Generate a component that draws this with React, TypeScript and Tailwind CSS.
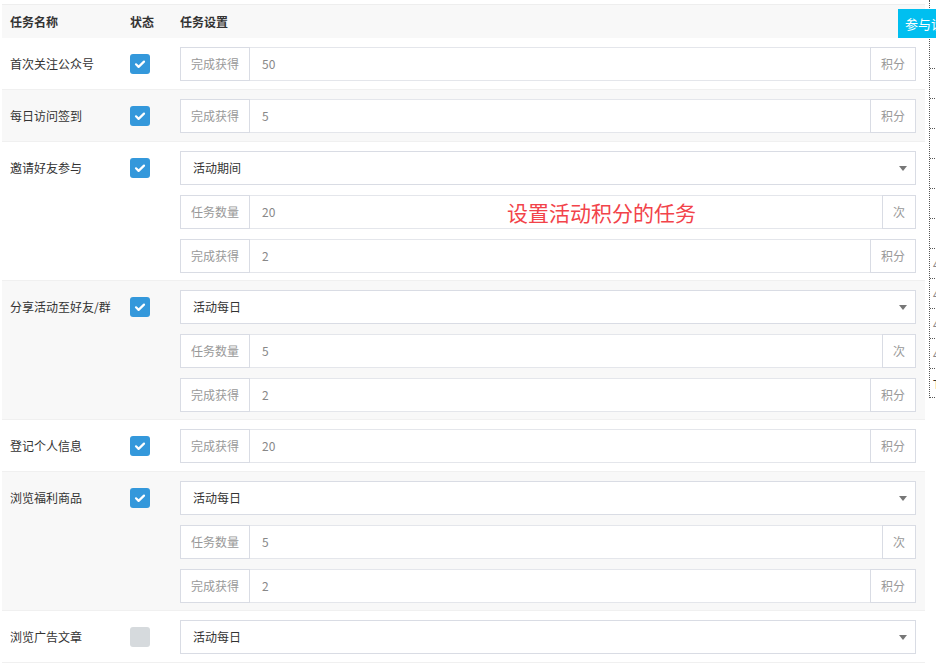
import React from 'react';

type Field =
  | { type: 'select'; value: string }
  | { type: 'input'; label: string; value: string; unit: string };

interface TaskRow {
  name: string;
  on: boolean;
  fields: Field[];
}

const daily = (count: string, points: string): Field[] => [
  { type: 'select', value: '活动每日' },
  { type: 'input', label: '任务数量', value: count, unit: '次' },
  { type: 'input', label: '完成获得', value: points, unit: '积分' },
];

// last row continues below the fold, only its select is in view
const rows: TaskRow[] = [
  { name: '首次关注公众号', on: true, fields: [{ type: 'input', label: '完成获得', value: '50', unit: '积分' }] },
  { name: '每日访问签到', on: true, fields: [{ type: 'input', label: '完成获得', value: '5', unit: '积分' }] },
  {
    name: '邀请好友参与',
    on: true,
    fields: [
      { type: 'select', value: '活动期间' },
      { type: 'input', label: '任务数量', value: '20', unit: '次' },
      { type: 'input', label: '完成获得', value: '2', unit: '积分' },
    ],
  },
  { name: '分享活动至好友/群', on: true, fields: daily('5', '2') },
  { name: '登记个人信息', on: true, fields: [{ type: 'input', label: '完成获得', value: '20', unit: '积分' }] },
  { name: '浏览福利商品', on: true, fields: daily('5', '2') },
  { name: '浏览广告文章', on: false, fields: [{ type: 'select', value: '活动每日' }] },
];

const font = { fontFamily: '"Noto Sans CJK SC", "Liberation Sans", sans-serif' };

function Checkbox({ on }: { on: boolean }) {
  if (!on) return <div className="w-5 h-5 rounded-[3px] bg-[#d6dadd]" />;
  return (
    <div className="w-5 h-5 rounded-[3px] bg-[#3498db] flex items-center justify-center">
      <svg width="14" height="14" viewBox="0 0 14 14" fill="none">
        <path d="M3 7.3l2.6 2.6L11 4.6" stroke="white" strokeWidth="2.2" strokeLinecap="round" strokeLinejoin="round" />
      </svg>
    </div>
  );
}

function Control({ field }: { field: Field }) {
  if (field.type === 'select') {
    return (
      <div className="h-[34px] flex items-center bg-white border border-[#d9dce4] pl-3 pr-2">
        <span className="flex-1 text-xs text-[#333]">{field.value}</span>
        <span className="w-0 h-0 border-x-4 border-x-transparent border-t-[5px] border-t-[#777]" />
      </div>
    );
  }
  return (
    <div className="h-[34px] flex bg-white">
      <div className="w-[70px] shrink-0 flex items-center justify-center border border-[#d9dce4] text-xs text-[#999]">
        {field.label}
      </div>
      <div className="flex-1 flex items-center pl-3 border-y border-[#e4e6eb] text-xs text-[#888]">{field.value}</div>
      <div
        className={`shrink-0 flex items-center justify-center border border-[#d9dce4] text-xs text-[#999] ${
          field.unit === '次' ? 'w-[34px]' : 'w-[46px]'
        }`}
      >
        {field.unit}
      </div>
    </div>
  );
}

export default function App() {
  return (
    <div className="relative w-[936px] h-[663px] overflow-hidden bg-white flex items-start" style={font}>
      <div className="ml-[2px] mt-1 w-[923px] shrink-0">
        <div className="h-[34px] flex items-center border-t border-[#eee] bg-[#f8f8f8] text-xs font-bold text-[#333]">
          <div className="w-[118px] pl-2">任务名称</div>
          <div className="w-[50px] pl-[10px]">状态</div>
          <div className="pl-[10px]">任务设置</div>
        </div>
        {rows.map((row, i) => (
          <div
            key={row.name}
            className={`flex pt-[9px] border-b border-[#f0f0f0] ${row.fields.length > 1 ? 'pb-[7px]' : 'pb-2'} ${
              i % 2 === 1 ? 'bg-[#f8f8f8]' : 'bg-white'
            }`}
          >
            <div className="w-[118px] pl-2 h-[34px] flex items-center text-xs text-[#333] shrink-0">{row.name}</div>
            <div className="w-[50px] pl-[10px] h-[34px] flex items-center shrink-0">
              <Checkbox on={row.on} />
            </div>
            <div className="flex-1 pl-[10px] pr-[9px] flex flex-col gap-[10px]">
              {row.fields.map((f, j) => (
                <Control key={j} field={f} />
              ))}
            </div>
          </div>
        ))}
      </div>

      <div className="ml-1 w-[40px] shrink-0 h-[398px] border-l border-b border-dotted border-[#555]">
        <div className="h-[68px]" />
        {Array.from({ length: 11 }).map((_, k) => (
          <div key={k} className="h-[30px] border-t border-dotted border-[#555] flex items-center pl-[3px] text-xs text-[#888]">
            {k >= 6 && k <= 9 ? '4' : k === 10 ? <span className="text-[#333]">T</span> : ''}
          </div>
        ))}
      </div>

      <div className="absolute left-[898px] top-[9px] w-[60px] h-[29px] bg-[#00bff0] text-white text-[13px] flex items-center pl-[7px] whitespace-nowrap">
        参与设置
      </div>

      <div className="absolute left-[507px] top-[198px] text-[21px] leading-7 text-[#f2434a] whitespace-nowrap">
        设置活动积分的任务
      </div>
    </div>
  );
}
